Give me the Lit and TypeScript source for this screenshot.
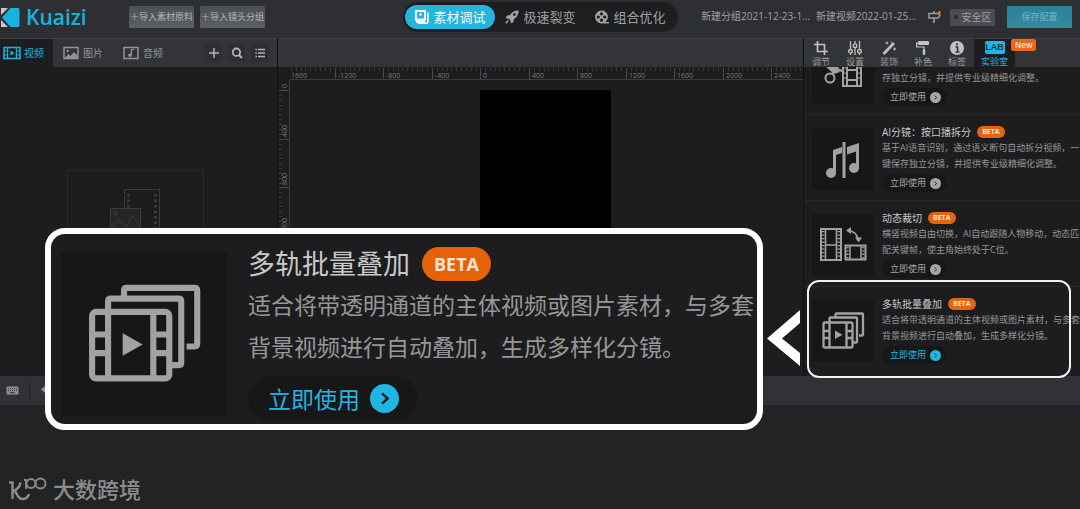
import { LitElement, html, svg, css, nothing } from "lit";
import { customElement, property } from "lit/decorators.js";

const icons: Record<string, unknown> = {
  film: svg`<rect x="1" y="1.5" width="16" height="11" fill="none" stroke="currentColor" stroke-width="1.6"/><path d="M4.6 1.5v11M13.4 1.5v11" stroke="currentColor" stroke-width="1.2"/><path d="M1 5h3.6M1 9h3.6M13.4 5H17M13.4 9H17" stroke="currentColor" stroke-width="1.2"/><path d="M7.5 4.6l4 2.4-4 2.4z" fill="currentColor"/>`,
  picture: svg`<rect x="1" y="1.5" width="14" height="11" fill="none" stroke="currentColor" stroke-width="1.5"/><circle cx="4.6" cy="5" r="1.2" fill="currentColor"/><path d="M2 12l3.4-4 2.2 2L11 6l3.4 3.6V12z" fill="currentColor"/>`,
  audio: svg`<rect x="1" y="1.5" width="14" height="11" fill="none" stroke="currentColor" stroke-width="1.5"/><path d="M8.3 9.4V4l2.8-1" fill="none" stroke="currentColor" stroke-width="1.3"/><circle cx="7" cy="9.3" r="1.8" fill="currentColor"/>`,
  plus: svg`<path d="M7 2v10M2 7h10" stroke="currentColor" stroke-width="1.5"/>`,
  search: svg`<circle cx="6.4" cy="6.2" r="3.7" fill="none" stroke="currentColor" stroke-width="1.8"/><path d="M9 9l3 3" stroke="currentColor" stroke-width="2"/>`,
  list: svg`<path d="M5 3.5h7M5 7h7M5 10.5h7" stroke="currentColor" stroke-width="1.4"/><path d="M2.4 3.5h1.5M2.4 7h1.5M2.4 10.5h1.5" stroke="currentColor" stroke-width="1.4"/>`,
  debug: svg`<path fill-rule="evenodd" fill="currentColor" d="M1 0h9q1 0 1 1v9q0 1-1 1H1q-1 0-1-1V1q0-1 1-1zM2 2v6.500h7V2z"/><circle cx="5.500" cy="4.500" r="1.300" fill="currentColor"/><path d="M1 10h9v3H1z" fill="currentColor"/><path d="M12.800 2.500V12q0 1.200-1.200 1.200H3" fill="none" stroke="currentColor" stroke-width="1.700"/>`,
  rocket: svg`<path fill="currentColor" fill-rule="evenodd" d="M13.600.4C9.500.3 6.500 2.200 4.700 5.200L2 5.500.5 8.200l2.700.2 2.400 2.400.3 2.700 2.600-1.500.3-2.700c3-1.800 4.900-4.800 4.800-8.900zM9.400 3.200a1.300 1.300 0 110 2.700 1.300 1.300 0 010-2.700z"/><path d="M3.200 10.400L.8 13.200" stroke="currentColor" stroke-width="1.600"/>`,
  reel: svg`<path fill="currentColor" fill-rule="evenodd" d="M6.500.5a6.300 6.300 0 014.900 10.300l-.9 1.200H14v1.400H6.500A6.400 6.400 0 016.500.5zM6.500 2.200a1.600 1.600 0 100 3.200 1.600 1.600 0 000-3.200zM3.300 5.400a1.600 1.600 0 100 3.200 1.600 1.600 0 000-3.200zM9.700 5.400a1.600 1.600 0 100 3.200 1.600 1.600 0 000-3.200zM6.500 8.600a1.600 1.600 0 100 3.200 1.600 1.600 0 000-3.200z"/>`,
  sign: svg`<path d="M2 3.500h9l2 2-2 2.500H2z" fill="none" stroke="currentColor" stroke-width="1.500"/><path d="M7 8v5" stroke="currentColor" stroke-width="1.700"/><path d="M7 1v2" stroke="currentColor" stroke-width="1.500"/><circle cx="12.500" cy="2.500" r="1.500" fill="#e8641b"/>`,
  crop: svg`<path d="M3.500 0v10.500H14M0 3.500h10.500V14" fill="none" stroke="currentColor" stroke-width="1.700"/>`,
  sliders: svg`<path d="M2.500 0v8M7 0v2.500M7 7v7M11.500 0v8M2.500 12.500V14M11.500 12.500V14" stroke="currentColor" stroke-width="1.300"/><g fill="none" stroke="currentColor" stroke-width="1.400"><circle cx="2.500" cy="10.300" r="1.800"/><circle cx="7" cy="4.700" r="1.800"/><circle cx="11.500" cy="10.300" r="1.800"/></g>`,
  wand: svg`<path d="M1.500 13L12 2" stroke="currentColor" stroke-width="2.600"/><path d="M5 .5v3M3.500 2h3M12.500 6.500v3M11 8h3M9 .5l.5 1" stroke="currentColor" stroke-width="1"/>`,
  roller: svg`<rect x="2" y="0" width="11" height="4" rx="1" fill="currentColor"/><path d="M2 2H.6v4H8v3" fill="none" stroke="currentColor" stroke-width="1.200"/><rect x="6.700" y="8" width="2.600" height="6" rx="1" fill="currentColor"/>`,
  info: svg`<circle cx="7" cy="7" r="7" fill="currentColor"/><path d="M5.500 6H7.500v5M5.500 11h4" fill="none" stroke="#333538" stroke-width="1.600"/><circle cx="7" cy="3.400" r="1.100" fill="#333538"/>`,
  keyboard: svg`<rect x=".5" y=".5" width="12" height="8" rx="1" fill="#8e8f91"/><path d="M2 2.700h9M2 4.600h9" stroke="#333538" stroke-width="1" stroke-dasharray="1 1"/><path d="M4 6.700h5" stroke="#333538" stroke-width="1"/>`,
};

const icon = (name: string, w = 14, h = 14) =>
  html`<svg class="ic" width=${w} height=${h} viewBox="0 0 ${w} ${h}" aria-hidden="true">${icons[name]}</svg>`;

const art: Record<string, unknown> = {
  split: svg`<g fill="none" stroke="currentColor" stroke-width="2"><circle cx="18" cy="36" r="4.500"/><path d="M20 32L30 19M12 20l20 10"/><rect x="31" y="21" width="18" height="23"/><path d="M35 21v23M45 21v23M35 28h10M35 38h10"/><path d="M31 26h4M31 31h4M31 36h4M45 26h4M45 31h4M45 36h4" stroke-width="1.200"/></g><path d="M12 23l12 2 4 5-6 2z" fill="currentColor"/>`,
  music: svg`<g fill="currentColor"><circle cx="19" cy="45" r="5"/><circle cx="42" cy="40" r="5"/><path d="M21 22l9-3v6l-6 2V45h-3zM30.500 14h3v36h-3zM35 19l12-4v25h-3V23.500l-9 3z"/></g>`,
  crop: svg`<g fill="none" stroke="currentColor"><rect x="9" y="15" width="20" height="31" stroke-width="2"/><path d="M13.500 15v31M24.500 15v31M13.500 31h11" stroke-width="1.600"/><path d="M11.300 17v28M26.800 17v28" stroke-width="2.400" stroke-dasharray="1.300 2.200"/><rect x="33.500" y="31.500" width="20" height="14" stroke-width="2"/><path d="M38 31v15M49 31v15" stroke-width="1.500"/><path d="M35.700 33v12M51.300 33v12" stroke-width="2" stroke-dasharray="1.300 2"/><path d="M36 17q9 0 10 9" stroke-width="1.600"/></g><path d="M39 13v7l-5-3.500zM43 23.500h7l-3.500 5z" fill="currentColor"/>`,
  stack: svg`<g fill="none" stroke="currentColor" stroke-width="2.300" stroke-linejoin="round"><path d="M23.500 18v-3.500q0-1 1-1h25.500q1 0 1 1v20q0 1-1 1H47"/><path d="M17.500 22v-3.500q0-1 1-1h25.500q1 0 1 1V41.500q0 1-1 1H41"/><rect x="11.500" y="22.500" width="29" height="25" rx="1.500"/><path d="M17.500 22.500V47M34.500 22.500V47M11.500 31h6M11.500 38h6M34.500 31h6M34.500 38h6"/></g><path d="M23 30.500v8.500l7.500-4.200z" fill="currentColor"/>`,
};

interface Feature {
  art: string;
  title?: string;
  lines: string[];
  active?: boolean;
}

const features: Feature[] = [
  { art: "split", lines: ["", "存独立分镜，并提供专业级精细化调整。"] },
  { art: "music", title: "AI分镜：按口播拆分", lines: ["基于AI语音识别，通过语义断句自动拆分视频，一", "键保存独立分镜，并提供专业级精细化调整。"] },
  { art: "crop", title: "动态裁切", lines: ["横竖视频自由切换，AI自动跟随人物移动，动态匹", "配关键帧，使主角始终处于C位。"] },
  { art: "stack", title: "多轨批量叠加", lines: ["适合将带透明通道的主体视频或图片素材，与多套", "背景视频进行自动叠加，生成多样化分镜。"], active: true },
];

@customElement("feature-card")
class FeatureCard extends LitElement {
  @property({ attribute: false }) data!: Feature;
  @property({ type: Boolean, reflect: true }) large = false;

  static styles = css`
    :host { display: block; color: #979798; }
    .card { display: flex; align-items: flex-start; gap: 8px; }
    .thumb { flex: none; width: 62px; height: 62px; margin-top: 4px; border-radius: 2px; background: #171718; color: #a2a2a2; }
    .thumb svg { display: block; width: 100%; height: 100%; }
    .body { flex: 1; min-width: 0; }
    .head { display: flex; align-items: center; gap: 6px; height: 16px; }
    h3 { margin: 0; font-size: 10px; font-weight: 400; color: #c9c9ca; white-space: nowrap; }
    .beta { display: flex; align-items: center; height: 12px; padding: 0 5px; border-radius: 6px; background: #e5650f; color: #fbe6d3; font-size: 7px; font-weight: 700; }
    p { margin: 0; min-height: 16px; font-size: 9px; line-height: 16px; white-space: nowrap; }
    .use { display: flex; align-items: center; gap: 4px; height: 18px; margin: 2px 0 0; padding: 0 6px 0 8px; border: 0; border-radius: 9px; background: #171718; color: #a6a6a7; font: inherit; font-size: 9px; line-height: 16px; }
    .use svg { width: 11px; height: 11px; }
    .use.on { color: #1fb6e4; }
    :host([large]) .card { gap: 21px; }
    :host([large]) .thumb { width: 166px; height: 165px; margin: 5px 0 0; border-radius: 4px; }
    :host([large]) .head { height: 34px; gap: 12px; margin-bottom: 3px; }
    :host([large]) h3 { font-size: 27px; }
    :host([large]) .beta { height: 34px; padding: 0 12px; border-radius: 17px; background: #e66208; font-size: 18px; }
    :host([large]) p { font-size: 23px; line-height: 42px; }
    :host([large]) .use { height: 45px; margin-top: 8px; padding: 0 18px 0 20px; gap: 10px; border-radius: 23px; font-size: 23px; }
    :host([large]) .use svg { width: 29px; height: 29px; }
  `;

  render() {
    const d = this.data;
    return html`<article class="card">
      <div class="thumb"><svg viewBox="0 0 62 62" aria-hidden="true">${art[d.art]}</svg></div>
      <div class="body">
        <div class="head">${d.title ? html`<h3>${d.title}</h3><span class="beta">BETA</span>` : nothing}</div>
        ${d.lines.map((l) => html`<p>${l}</p>`)}
        <button class="use ${d.active ? "on" : ""}">立即使用
          <svg viewBox="0 0 12 12" aria-hidden="true"><circle cx="6" cy="6" r="6" fill="currentColor"/><path d="M5 3.900L7.300 6 5 8.100" fill="none" stroke="#1c1c1e" stroke-width="1"/></svg>
        </button>
      </div>
    </article>`;
  }
}

/* Distance on the rulers between two labelled marks, 400 units apart. */
const STEP = 48.5;

@customElement("app-root")
class AppRoot extends LitElement {
  static styles = css`
    :host { display: block; font-family: "Open Sans", "Noto Sans CJK SC", sans-serif; font-size: 10px; line-height: 16px; color: #a0a1a3; }
    * { box-sizing: border-box; }
    button { margin: 0; padding: 0; border: 0; background: none; color: inherit; font: inherit; white-space: nowrap; }
    .ic { flex: none; display: block; }
    .shell { position: relative; display: flex; flex-direction: column; height: 100vh; overflow: hidden; background: #222325; }

    header { flex: none; display: grid; grid-template-columns: 1fr auto 1fr; height: 38px; background: #2e2f32; }
    .side { display: flex; align-items: center; height: 34px; min-width: 0; }
    .brand { display: flex; align-items: center; gap: 6px; width: 129px; padding-left: 1px; color: #18b2df; font-size: 21px; font-weight: 600; line-height: 30px; }
    .import { width: 65px; height: 22px; margin-right: 6px; background: linear-gradient(#4c5054, #5d6165); border-radius: 1px; color: #b5b6b8; font-size: 9px; }
    .modes { display: flex; align-items: center; height: 30px; margin-top: 2px; padding: 0 3px 0 2px; border-radius: 15px; background: #1d1e20; }
    .modes button { display: flex; align-items: center; gap: 5px; width: 90px; height: 24px; padding-left: 10px; border-radius: 12px; font-size: 13px; }
    .modes .on { background: #27b4dc; color: #f1fafd; }
    .right { justify-content: flex-end; padding-right: 8px; white-space: nowrap; }
    .right .name { margin: 0 6px 2px 0; }
    .right .ic { margin: 0 8px 0 5px; }
    .safe { width: 45px; height: 17px; background: #4b4d50; border-radius: 1px; }
    .safe::before { content: ""; display: inline-block; width: 4px; height: 4px; margin: 0 4px 2px 0; border-radius: 2px; background: #2a2b2d; }
    .save { width: 65px; height: 22px; margin-left: 12px; background: linear-gradient(#2c8299, #35899f); border-radius: 1px; color: #72b5c6; font-size: 9px; }

    main { flex: 1; min-height: 0; display: grid; grid-template-columns: 278px 1fr 277px; }
    main > section { display: flex; flex-direction: column; min-width: 0; min-height: 0; background: #1d1d1f; }
    .bar { flex: none; display: flex; height: 29px; border-top: 1px solid #3d3e41; background: #323437; }
    .assets { border-right: 1px solid #101011; }
    .tab { display: flex; align-items: center; gap: 4px; width: 60px; padding-left: 10px; color: #939496; }
    .tab.on { width: 53px; padding-left: 3px; gap: 3px; background: #1d1d1f; color: #1fb0dc; }
    .tools { display: flex; align-items: center; gap: 6px; margin-left: auto; padding-right: 9px; }
    .tools button { display: grid; place-items: center; width: 17px; height: 18px; background: #2d2f32; color: #b4b5b7; }
    .empty { flex: 1; display: grid; place-items: center; padding-right: 7px; }
    .drop { display: flex; justify-content: center; width: 137px; height: 104px; padding-top: 18px; border: 1px solid #2b2b2d; }

    .stage { flex: 1; min-height: 0; display: grid; grid-template: 13px 1fr / 12px 1fr; }
    .ruler { display: block; width: 100%; height: 100%; overflow: hidden; fill: #77787a; font-size: 7px; }
    .top-ruler { border-bottom: 1px solid #3c3d3f; }
    .left-ruler { border-right: 1px solid #3c3d3f; }
    .canvas { display: flex; justify-content: center; min-height: 0; padding: 10px 2px 0 0; overflow: hidden; }
    .frame { flex: none; width: 131px; height: 233px; background: #000; }

    main > .lab { position: relative; border-left: 1px solid #101011; }
    .lab .bar button { display: flex; flex-direction: column; align-items: center; gap: 1px; width: 34px; padding-top: 2px; font-size: 9px; line-height: 11px; color: #9c9d9f; }
    .lab .bar .ic { color: #c0c1c2; }
    .lab .bar button.on { width: 41px; background: #1d1d1f; color: #1fb6e4; }
    .tag { display: block; width: 20px; height: 13px; margin-bottom: 1px; border-radius: 2px; background: #1fb6e4; color: #18343d; font-family: "Liberation Sans", sans-serif; font-weight: 700; font-size: 9px; line-height: 13px; text-align: center; }
    .new { height: 12px; margin-left: -4px; padding: 0 4px; border-radius: 2px; background: #f0641c; color: #ffe6d6; font-size: 8px; line-height: 12px; font-weight: 600; z-index: 1; }
    .list { flex: 1; min-height: 0; display: flex; flex-direction: column; justify-content: flex-end; padding-bottom: 4px; overflow: hidden; }
    .list feature-card { flex: none; height: 86px; padding: 9px 0 0 8px; border-top: 1px solid #28282a; }
    .focus { position: absolute; z-index: 2; left: 3px; right: 9px; bottom: -2px; height: 98px; border: 2px solid #f2f2f2; border-radius: 12px; pointer-events: none; }

    .timeline { flex: none; height: 133px; display: flex; flex-direction: column; justify-content: space-between; }
    .timeline .strip { display: flex; align-items: center; gap: 10px; height: 29px; padding-left: 6px; background: #303235; }
    .divider { width: 1px; height: 17px; background: #222325; }
    .mark { display: flex; align-items: center; gap: 6px; height: 32px; margin-bottom: 4px; padding-left: 9px; color: #8d8d8e; font-size: 22px; font-weight: 500; line-height: 32px; }

    .callout { position: absolute; z-index: 3; left: 45px; right: 317px; top: 228px; height: 202px; padding: 13px 0 0 10px; border: 6px solid #fff; border-radius: 20px; background: #1d1d1f; }
    .callout .pointer { position: absolute; left: calc(100% + 10px); top: 76px; }
  `;

  private topRuler() {
    const zero = 190;
    const out: unknown[] = [];
    for (let i = -4; i <= 6; i++) {
      const x = Math.round(zero + i * STEP);
      const label = i === -4 ? "1600" : String(i * 400);
      out.push(svg`<path d="M${x + 0.5} 1v12" stroke="#48494b"/><text x=${Math.max(x + 3, 1)} y="11">${label}</text>`);
      for (let k = 1; k < 10; k++) out.push(svg`<path d="M${Math.round(x + k * 4.85) + 0.5} 1v3" stroke="#3c3d3f"/>`);
    }
    return html`<svg class="ruler">${out}</svg>`;
  }

  private leftRuler() {
    const out: unknown[] = [];
    for (let i = 0; i <= 3; i++) {
      const y = Math.round(10 + i * STEP);
      out.push(svg`<path d="M1 ${y + 0.5}h10" stroke="#48494b"/><text transform="translate(9 ${y - 2}) rotate(-90)">${i * 400}</text>`);
      for (let k = 1; k < 10; k++) out.push(svg`<path d="M1 ${Math.round(y + k * 4.85) + 0.5}h3" stroke="#3c3d3f"/>`);
    }
    return html`<svg class="ruler">${out}</svg>`;
  }

  render() {
    const tools = [
      ["crop", "调节"],
      ["sliders", "设置"],
      ["wand", "装饰"],
      ["roller", "补色"],
      ["info", "标签"],
    ];
    return html`<div class="shell">
      <header>
        <div class="side">
          <div class="brand">
            <svg class="ic" width="19" height="19" viewBox="0 0 19 19" aria-hidden="true"><path d="M0 0h7L0 7zM0 12l7 7H0z" fill="#c9cacb"/><path d="M9.500 0H17q1.500 0 1.500 1.500v16q0 1.500-1.500 1.500H9.500L1 9.500z" fill="#18b2df"/></svg>
            <span>Kuaizi</span>
          </div>
          <button class="import">＋导入素材原料</button>
          <button class="import">＋导入镜头分组</button>
        </div>
        <nav class="modes">
          <button class="on">${icon("debug")}素材调试</button>
          <button>${icon("rocket")}极速裂变</button>
          <button>${icon("reel")}组合优化</button>
        </nav>
        <div class="side right">
          <span class="name">新建分组2021-12-23-1…</span>
          <span class="name">新建视频2022-01-25…</span>
          ${icon("sign", 15, 14)}
          <button class="safe">安全区</button>
          <button class="save">保存配置</button>
        </div>
      </header>

      <main>
        <section class="assets">
          <div class="bar">
            <button class="tab on">${icon("film", 18, 14)}视频</button>
            <button class="tab">${icon("picture", 16, 14)}图片</button>
            <button class="tab">${icon("audio", 16, 14)}音频</button>
            <div class="tools">
              <button aria-label="添加">${icon("plus")}</button>
              <button aria-label="搜索">${icon("search")}</button>
              <button aria-label="列表">${icon("list")}</button>
            </div>
          </div>
          <div class="empty">
            <div class="drop">
              <svg width="50" height="60" viewBox="0 0 50 60" aria-hidden="true" fill="none" stroke="#3a3b3d"><rect x="14.500" y=".5" width="35" height="52"/><path d="M18.500 5v46M45.500 5v46" stroke-width="3" stroke-dasharray="2.500 3"/><rect x=".5" y="19.500" width="30" height="26" fill="#242628"/><rect x="4" y="23" width="3" height="3"/><path d="M1 39l8-8 7 7 6-11 8 9"/></svg>
            </div>
          </div>
        </section>

        <section>
          <div class="bar"></div>
          <div class="stage">
            <div></div>
            <div class="top-ruler">${this.topRuler()}</div>
            <div class="left-ruler">${this.leftRuler()}</div>
            <div class="canvas"><div class="frame"></div></div>
          </div>
        </section>

        <section class="lab">
          <div class="bar">
            ${tools.map(([name, label]) => html`<button>${icon(name)}${label}</button>`)}
            <button class="on"><span class="tag">LAB</span>实验室</button>
            <span class="new">New</span>
          </div>
          <div class="list">${features.map((f) => html`<feature-card .data=${f}></feature-card>`)}</div>
          <div class="focus"></div>
        </section>
      </main>

      <footer class="timeline">
        <div class="strip">${icon("keyboard", 13, 9)}<span class="divider"></span>
          <svg width="12" height="9" viewBox="0 0 12 9" aria-hidden="true"><path d="M5 0v2q6 0 6 6-2-3-6-3v2L1 3.500z" fill="#8e8f91"/></svg>
        </div>
        <div class="mark">
          <svg class="ic" width="38" height="25" viewBox="0 0 38 25" aria-hidden="true" fill="none" stroke="currentColor" stroke-width="2.400"><path d="M0 5.500h3.500V22M11.500 5.500q-1 6-7 8.500 2 0 4 4.500 2 4 6 3.500 4-.5 5.500-5"/><path d="M15 3h2v9" stroke-width="1.800"/><g stroke-width="1.800"><circle cx="22" cy="6.500" r="4.500"/><circle cx="31.500" cy="6.500" r="5"/></g></svg>
          <span>大数跨境</span>
        </div>
      </footer>

      <aside class="callout">
        <feature-card large .data=${features[3]}></feature-card>
        <svg class="pointer" width="34" height="57" viewBox="0 0 34 57" aria-hidden="true"><path d="M33 0v13L15 28.500 33 43v13L0 28.500z" fill="#fff"/></svg>
      </aside>
    </div>`;
  }
}
